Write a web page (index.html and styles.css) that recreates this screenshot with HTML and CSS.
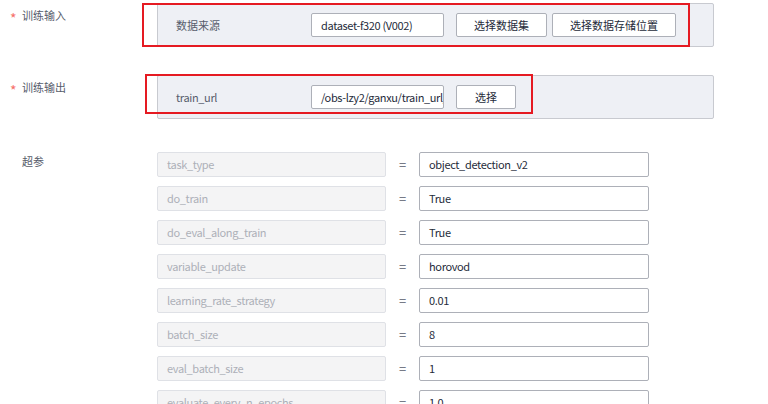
FILE: index.html
```html
<!DOCTYPE html>
<html lang="zh-CN">
<head>
<meta charset="utf-8">
<title>训练参数</title>
<link rel="stylesheet" href="styles.css">
</head>
<body>
<div class="form">
  <div class="form-item first">
    <div class="item-label"><span class="star">*</span>训练输入</div>
    <div class="panel">
      <span class="panel-label">数据来源</span>
      <div class="text-input">dataset-f320 (V002)</div>
      <button class="btn btn-first">选择数据集</button>
      <button class="btn">选择数据存储位置</button>
      <div class="mark mark-input"></div>
    </div>
  </div>
  <div class="form-item second">
    <div class="item-label"><span class="star">*</span>训练输出</div>
    <div class="panel">
      <span class="panel-label latin">train_url</span>
      <div class="text-input">/obs-lzy2/ganxu/train_url/</div>
      <button class="btn btn-first btn-min">选择</button>
      <div class="mark mark-output"></div>
    </div>
  </div>
  <div class="form-item third">
    <div class="item-label plain">超参</div>
    <div class="param-list">
      <div class="param-row"><div class="key">task_type</div><div class="eq">=</div><div class="val">object_detection_v2</div></div>
      <div class="param-row"><div class="key">do_train</div><div class="eq">=</div><div class="val">True</div></div>
      <div class="param-row"><div class="key">do_eval_along_train</div><div class="eq">=</div><div class="val">True</div></div>
      <div class="param-row"><div class="key">variable_update</div><div class="eq">=</div><div class="val">horovod</div></div>
      <div class="param-row"><div class="key">learning_rate_strategy</div><div class="eq">=</div><div class="val">0.01</div></div>
      <div class="param-row"><div class="key">batch_size</div><div class="eq">=</div><div class="val">8</div></div>
      <div class="param-row"><div class="key">eval_batch_size</div><div class="eq">=</div><div class="val">1</div></div>
      <div class="param-row"><div class="key">evaluate_every_n_epochs</div><div class="eq">=</div><div class="val">1.0</div></div>
    </div>
  </div>
</div>
</body>
</html>
```
FILE: styles.css
```css
html, body {
  margin: 0;
  padding: 0;
  background: #ffffff;
  overflow: hidden;
}
body {
  font-family: "Noto Sans CJK SC", "Liberation Sans", sans-serif;
  font-size: 11px;
  color: #252b3a;
  width: 768px;
  height: 404px;
}
.form {
  padding-top: 3px;
}
.form-item {
  display: grid;
  grid-template-columns: 157px 557px;
}
.form-item.second {
  margin-top: 28px;
}
.form-item.third {
  margin-top: 33px;
}
.item-label {
  padding-left: 10px;
  padding-top: 3px;
  line-height: 18px;
  color: #575d6c;
}
.item-label.plain {
  padding-left: 22px;
  padding-top: 0;
}
.star {
  color: #f66f6a;
  display: inline-block;
  width: 12px;
  font-size: 14px;
  line-height: 18px;
  vertical-align: -4px;
}
.panel {
  position: relative;
  display: flex;
  align-items: center;
  height: 44px;
  box-sizing: border-box;
  border: 1px solid #c8cad0;
  border-radius: 2px;
  background: #eef0f5;
  padding-left: 18px;
}
.panel-label {
  width: 135px;
  flex: none;
  color: #575d6c;
}
.latin, .text-input, .key, .val {
  letter-spacing: -0.35px;
}
.text-input {
  width: 133px;
  height: 24px;
  box-sizing: border-box;
  border: 1px solid #adb0b8;
  border-radius: 2px;
  background: #fff;
  padding: 0 9px;
  line-height: 22px;
  white-space: nowrap;
  overflow: hidden;
  color: #252b3a;
}
.btn {
  height: 24px;
  box-sizing: border-box;
  border: 1px solid #adb0b8;
  border-radius: 2px;
  background: #fff;
  padding: 0 17px;
  margin-left: 5px;
  font-family: inherit;
  font-size: 11px;
  color: #252b3a;
  line-height: 22px;
}
.btn-first {
  margin-left: 12px;
}
.btn-min {
  width: 60px;
  padding: 0;
}
.mark {
  position: absolute;
  border: 2px solid #e51a22;
  box-sizing: border-box;
  pointer-events: none;
}
.mark-input {
  left: -16px;
  top: -1px;
  width: 548px;
  height: 44px;
}
.mark-output {
  left: -13px;
  top: -2px;
  width: 388px;
  height: 40px;
}
.param-list {
  display: flex;
  flex-direction: column;
  gap: 9px;
}
.param-row {
  display: flex;
  align-items: center;
  height: 25px;
}
.key, .val {
  height: 25px;
  box-sizing: border-box;
  border-radius: 2px;
  padding: 0 9px;
  line-height: 23px;
  white-space: nowrap;
  overflow: hidden;
}
.key {
  width: 229px;
  border: 1px solid #dfe1e6;
  background: #f4f4f5;
  color: #adb0b8;
}
.eq {
  width: 33px;
  text-align: center;
  color: #575d6c;
  font-size: 13px;
}
.val {
  width: 230px;
  border: 1px solid #adb0b8;
  background: #fff;
  color: #252b3a;
}
```
